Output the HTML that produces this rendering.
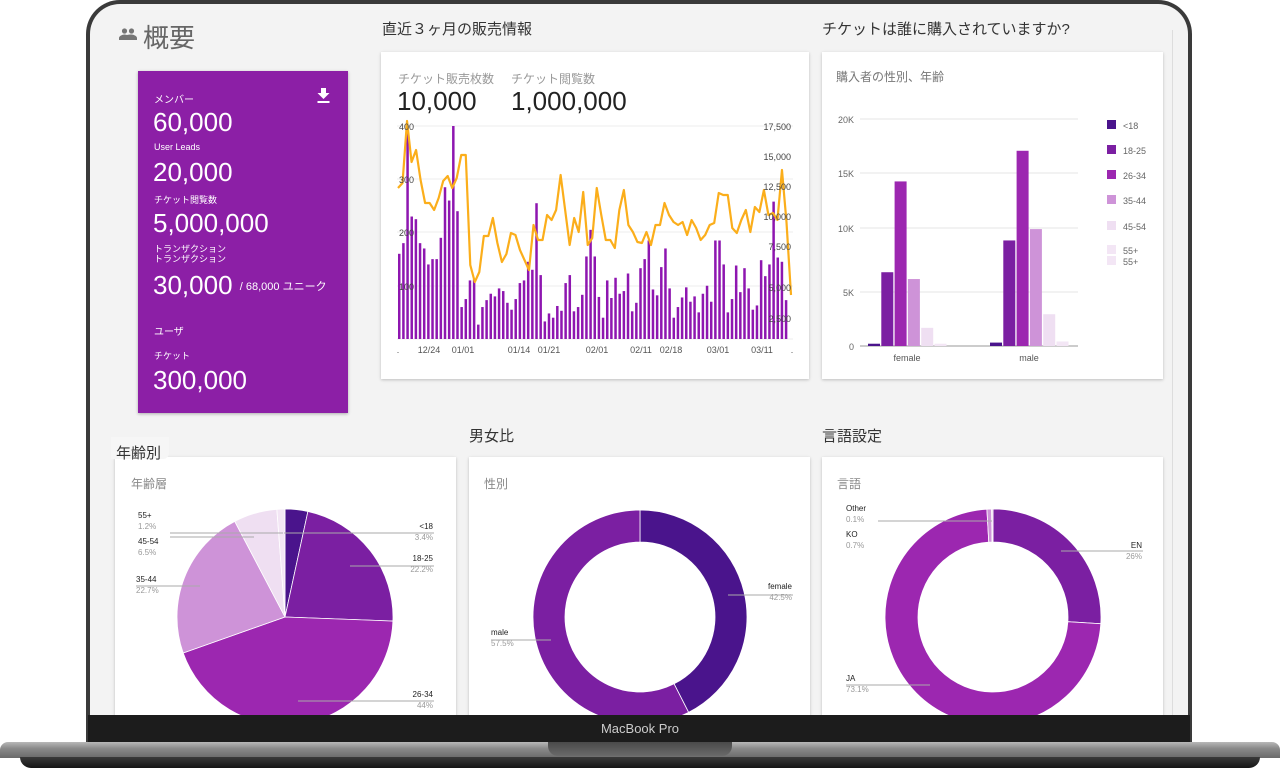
<!DOCTYPE html>
<html><head><meta charset="utf-8">
<style>
*{margin:0;padding:0;box-sizing:border-box}
body{width:1280px;height:779px;background:#fff;position:relative;overflow:hidden;font-family:"Liberation Sans","Noto Sans CJK JP",sans-serif}
.a{position:absolute}
.frame{left:86px;top:0;width:1106px;height:745px;border-radius:34px 34px 0 0;background:#3a3a3a}
.screen{left:90px;top:4px;width:1098px;height:712px;border-radius:30px 30px 0 0;background:#f3f3f3;overflow:hidden}
.card{background:#fff;box-shadow:0 1px 3px rgba(0,0,0,.22)}
.t{color:#333;font-size:15px}
.g{color:#888;font-size:12px}
.w{color:#fff}
</style></head><body>
<div class="a frame"></div>
<div class="a screen"></div>
<div class="a" style="left:1172px;top:30px;width:1px;height:686px;background:#ddd"></div>

<!-- header -->
<svg class="a" style="left:119px;top:28px" width="18" height="12" viewBox="0 0 18 12"><circle cx="5.5" cy="3" r="2.6" fill="#757575"/><circle cx="12.5" cy="3" r="2.6" fill="#757575"/><path d="M0 12v-2c0-2 3.5-3.5 5.5-3.5S11 8 11 10v2zM9 12v-2c0-1 0-2-1-3 1.5-.5 3-.5 4.5-.5 2 0 5.5 1.5 5.5 3.5v2z" fill="#757575"/></svg>
<div class="a" style="left:143px;top:18px;font-size:26px;color:#666">概要</div>

<!-- summary card -->
<div class="a" style="left:138px;top:71px;width:210px;height:342px;background:#8c1fa6;box-shadow:0 1px 3px rgba(0,0,0,.3)"></div>
<svg class="a" style="left:317px;top:88px" width="13" height="15" viewBox="0 0 13 15"><path d="M4 0h5v5h3.5L6.5 11 .5 5H4z" fill="#fff"/><rect x="0.5" y="13" width="12" height="2" fill="#fff"/></svg>
<div class="a w" style="left:154px;top:91px;font-size:10px">メンバー</div>
<div class="a w" style="left:153px;top:107px;font-size:26px">60,000</div>
<div class="a w" style="left:154px;top:142px;font-size:9px">User Leads</div>
<div class="a w" style="left:153px;top:157px;font-size:26px">20,000</div>
<div class="a w" style="left:154px;top:193px;font-size:9px">チケット閲覧数</div>
<div class="a w" style="left:153px;top:208px;font-size:26px">5,000,000</div>
<div class="a w" style="left:154px;top:244px;font-size:9px;line-height:10px">トランザクション<br>トランザクション</div>
<div class="a w" style="left:153px;top:270px;font-size:26px">30,000 <span style="font-size:11px;vertical-align:4px">/ 68,000 ユニーク</span></div>
<div class="a w" style="left:154px;top:323px;font-size:10px">ユーザ</div>
<div class="a w" style="left:154px;top:349px;font-size:9px">チケット</div>
<div class="a w" style="left:153px;top:365px;font-size:26px">300,000</div>

<!-- sales card -->
<div class="a t" style="left:382px;top:18px">直近３ヶ月の販売情報</div>
<div class="a card" style="left:381px;top:52px;width:428px;height:327px"></div>
<div class="a g" style="left:398px;top:70px;color:#999">チケット販売枚数</div>
<div class="a g" style="left:511px;top:70px;color:#999">チケット閲覧数</div>
<div class="a" style="left:397px;top:86px;font-size:26px;color:#222">10,000</div>
<div class="a" style="left:511px;top:86px;font-size:26px;color:#222">1,000,000</div>
<svg class="a" id="s1" style="left:381px;top:110px" width="428" height="260"></svg>

<!-- gender/age bar -->
<div class="a t" style="left:822px;top:18px">チケットは誰に購入されていますか?</div>
<div class="a card" style="left:822px;top:52px;width:341px;height:327px"></div>
<div class="a" style="left:836px;top:68px;font-size:12px;color:#777">購入者の性別、年齢</div>
<svg class="a" id="s2" style="left:822px;top:100px" width="341" height="270"></svg>

<!-- bottom -->
<div class="a t" style="left:469px;top:425px">男女比</div>
<div class="a t" style="left:822px;top:425px">言語設定</div>
<div class="a card" style="left:115px;top:457px;width:341px;height:270px"></div>
<div class="a card" style="left:469px;top:457px;width:341px;height:270px"></div>
<div class="a card" style="left:822px;top:457px;width:341px;height:270px"></div>
<div class="a" style="left:111px;top:437px;width:58px;height:22px;background:#f6f6f6;border-radius:0 0 6px 0"></div>
<div class="a t" style="left:116px;top:442px">年齢別</div>
<div class="a" style="left:131px;top:475px;font-size:12px;color:#888">年齢層</div>
<div class="a" style="left:484px;top:475px;font-size:12px;color:#888">性別</div>
<div class="a" style="left:837px;top:475px;font-size:12px;color:#888">言語</div>
<svg class="a" id="s3" style="left:90px;top:457px" width="1098" height="259"></svg>

<!-- bezel -->
<div class="a" style="left:88px;top:715px;width:1102px;height:28px;background:#1c1c1c"></div>
<div class="a" style="left:0;top:721px;width:1280px;font-size:13px;color:#ccc;text-align:center">MacBook Pro</div>
<div class="a" style="left:0;top:742px;width:1280px;height:16px;background:linear-gradient(#b8b8b8,#8a8a8a 40%,#6a6a6a);border-radius:8px 8px 0 0"></div>
<div class="a" style="left:20px;top:757px;width:1240px;height:11px;background:linear-gradient(#3a3a3a,#151515);border-radius:0 0 40px 40px"></div>
<div class="a" style="left:548px;top:742px;width:184px;height:14px;background:linear-gradient(#4a4a4a,#6a6a6a);border-radius:0 0 10px 10px"></div>

<script>
const NS="http://www.w3.org/2000/svg";
function add(svg,tag,at,txt){const e=document.createElementNS(NS,tag);for(const k in at)e.setAttribute(k,at[k]);if(txt!==undefined)e.textContent=txt;svg.appendChild(e);return e;}
// s1: origin (381,110)
const s1=document.getElementById('s1');
const ox=381,oy=110;
[126,179,232,286,339].forEach(y=>add(s1,'line',{x1:16,x2:412,y1:y-oy,y2:y-oy,stroke:'#eee'}));
const bars=[160,180,390,230,225,180,170,140,150,150,190,285,260,400,240,60,75,110,112,27,60,73,85,80,95,90,68,55,75,105,110,145,130,255,120,33,48,40,62,53,105,120,52,60,83,155,205,155,79,40,110,77,115,85,90,123,52,68,133,150,185,93,82,135,170,95,40,60,78,97,70,80,50,85,100,70,185,185,140,50,75,138,88,133,95,55,63,148,118,140,258,153,145,73];
const x0=398-ox,x1=789-ox,step=(x1-x0)/bars.length,base=339-oy,k=(339-126)/400;
bars.forEach((v,i)=>add(s1,'rect',{x:x0+i*step,y:base-v*k,width:step*0.6,height:v*k,fill:'#8e16b0'}));
const ln=[188,183,121,162,150,180,203,203,210,198,181,176,188,178,155,155,265,282,272,236,236,218,243,262,254,233,235,250,260,270,225,240,240,215,220,210,175,210,245,218,232,192,245,238,188,215,240,240,248,210,190,225,232,242,243,232,245,225,225,203,215,222,225,222,235,220,228,240,235,225,223,193,195,195,228,233,220,210,232,207,212,190,215,213,220,170,222,295];
const ls=(791-ox-x0)/(ln.length-1);
add(s1,'polyline',{points:ln.map((y,i)=>(x0+i*ls)+','+(y-oy)).join(' '),fill:'none',stroke:'#fbae1b','stroke-width':2.2,'stroke-linejoin':'round'});
[['400',126],['300',179],['200',232],['100',286]].forEach(a=>add(s1,'text',{x:399-ox,y:a[1]-oy+4,'font-size':9,fill:'#444'},a[0]));
[['17,500',126],['15,000',156],['12,500',186],['10,000',216],['7,500',246],['5,000',287],['2,500',318]].forEach(a=>add(s1,'text',{x:791-ox,y:a[1]-oy+4,'font-size':9,fill:'#444','text-anchor':'end'},a[0]));
[['.',398],['12/24',429],['01/01',463],['01/14',519],['01/21',549],['02/01',597],['02/11',641],['02/18',671],['03/01',718],['03/11',762],['.',792]].forEach(a=>add(s1,'text',{x:a[1]-ox,y:353-oy,'font-size':9,fill:'#555','text-anchor':'middle'},a[0]));
// s2 origin (822,100)
const s2=document.getElementById('s2');const px=822,py=100;
[['20K',119],['15K',173],['10K',228],['5K',292],['0',346]].forEach(a=>{add(s2,'line',{x1:860-px,x2:1078-px,y1:a[1]-py,y2:a[1]-py,stroke:a[0]=='0'?'#999':'#e6e6e6'});add(s2,'text',{x:854-px,y:a[1]-py+4,'font-size':9,fill:'#666','text-anchor':'end'},a[0]);});
const cols=['#4a148c','#7b1fa2','#9c27b0','#ce93d8','#efdff2','#f3e6f5'];
const fv=[0.2,6.5,14.5,5.9,1.6,0.2],mv=[0.3,9.3,17.2,10.3,2.8,0.4],sc=227/20;
fv.forEach((v,i)=>add(s2,'rect',{x:868+i*13.3-px,y:346-v*sc-py,width:12,height:v*sc,fill:cols[i]}));
mv.forEach((v,i)=>add(s2,'rect',{x:990+i*13.3-px,y:346-v*sc-py,width:12,height:v*sc,fill:cols[i]}));
add(s2,'text',{x:907-px,y:361-py,'font-size':9,fill:'#555','text-anchor':'middle'},'female');
add(s2,'text',{x:1029-px,y:361-py,'font-size':9,fill:'#555','text-anchor':'middle'},'male');
[['<18',125],['18-25',150],['26-34',175],['35-44',200],['45-54',226],['55+',250],['55+',261]].forEach((a,i)=>{add(s2,'rect',{x:1107-px,y:a[1]-5-py,width:9,height:9,fill:cols[Math.min(i,5)]});add(s2,'text',{x:1123-px,y:a[1]+4-py,'font-size':9,fill:'#666'},a[0]);});
// s3 origin (90,457)
const s3=document.getElementById('s3');const qx=90,qy=457;
function arc(cx,cy,r,ri,a0,a1,fill){const p=(r,a)=>[cx+r*Math.sin(a*2*Math.PI),cy-r*Math.cos(a*2*Math.PI)];const lg=(a1-a0)>0.5?1:0;const [x1,y1]=p(r,a0),[x2,y2]=p(r,a1);let d;if(ri){const [x3,y3]=p(ri,a1),[x4,y4]=p(ri,a0);d=`M${x1} ${y1}A${r} ${r} 0 ${lg} 1 ${x2} ${y2}L${x3} ${y3}A${ri} ${ri} 0 ${lg} 0 ${x4} ${y4}Z`;}else d=`M${cx} ${cy}L${x1} ${y1}A${r} ${r} 0 ${lg} 1 ${x2} ${y2}Z`;add(s3,'path',{d,fill,stroke:'#fff','stroke-width':0.8});}
function pie(cx,cy,r,ri,vals,cs){let a=0;vals.forEach((v,i)=>{arc(cx-qx,cy-qy,r,ri,a,a+v,cs[i]);a+=v;});}
pie(285,617,108,0,[.034,.222,.44,.227,.065,.012],cols);
pie(640,617,107,75,[.425,.575],['#4a148c','#7b1fa2']);
pie(993,617,108,75,[.26,.731,.007,.002],['#7b1fa2','#9c27b0','#ce93d8','#e8cfee']);
function lab(x,y,t,p,anchor){add(s3,'text',{x:x-qx,y:y-qy,'font-size':8,fill:'#222','text-anchor':anchor},t);add(s3,'text',{x:x-qx,y:y-qy+11,'font-size':8,fill:'#999','text-anchor':anchor},p);}
function ld(x1,y1,x2,y2){add(s3,'line',{x1:x1-qx,y1:y1-qy,x2:x2-qx,y2:y2-qy,stroke:'#aaa','stroke-width':1});}
lab(433,529,'<18','3.4%','end');ld(284,533,434,533);
lab(433,561,'18-25','22.2%','end');ld(350,566,434,566);
lab(433,697,'26-34','44%','end');ld(298,701,434,701);
lab(138,518,'55+','1.2%','start');lab(138,544,'45-54','6.5%','start');ld(170,533,283,533);ld(170,537,254,537);
lab(136,582,'35-44','22.7%','start');ld(136,586,200,586);
lab(792,589,'female','42.5%','end');ld(728,595,793,595);
lab(491,635,'male','57.5%','start');ld(491,640,551,640);
lab(1142,548,'EN','26%','end');ld(1061,551,1143,551);
lab(846,511,'Other','0.1%','start');lab(846,537,'KO','0.7%','start');ld(878,521,992,521);
lab(846,681,'JA','73.1%','start');ld(846,685,930,685);
</script>
</body></html>
